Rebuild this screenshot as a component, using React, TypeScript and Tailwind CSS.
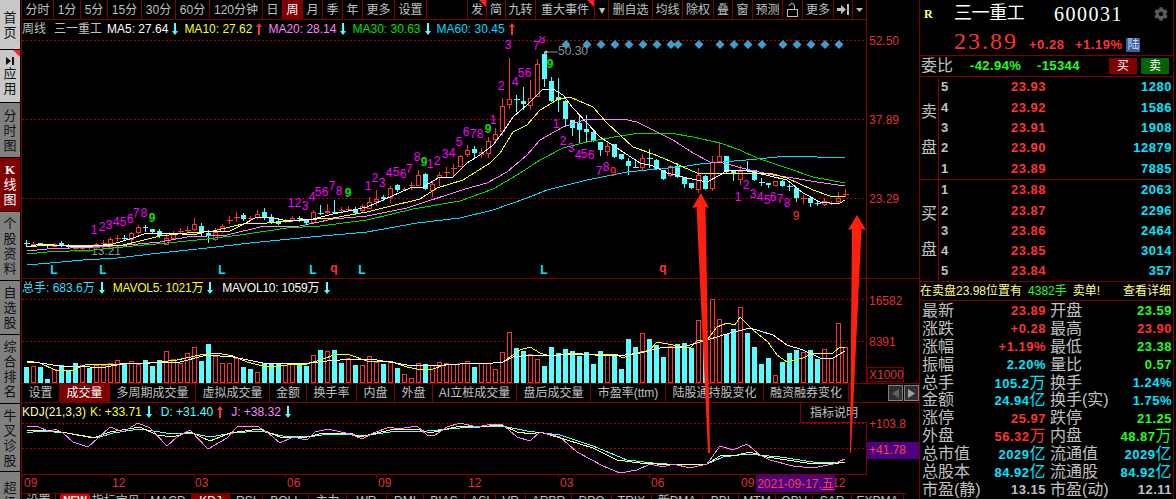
import { FaCog } from "react-icons/fa";

const RED = "#ff3232";
const CYAN = "#55ffff";

// [red?, bodyTop, bodyBottom, high, low] in page pixels, one per week, 7px apart
const candles: number[][] = [
  [0,243,243,240,247],[1,244,244,242,247],[0,243,246,243,246],[0,245,246,244,248],[1,244,246,243,247],[0,243,245,241,247],
  [0,246,246,244,249],[1,248,248,246,251],[1,247,248,246,250],[1,246,247,245,250],[1,244,247,243,250],[1,243,243,240,247],
  [1,239,243,237,247],[1,238,238,235,241],[0,238,238,235,241],[1,233,239,232,242],[1,227,232,225,234],[0,227,228,225,232],
  [0,229,232,229,233],[0,231,236,229,238],[1,238,244,234,245],[1,233,238,231,240],[1,231,231,228,234],[1,230,230,226,233],
  [1,224,229,218,231],[0,226,232,223,237],[0,233,236,230,243],[1,232,239,228,241],[1,226,231,224,233],[1,220,220,216,224],
  [1,217,217,212,222],[0,215,219,213,221],[1,218,218,216,221],[1,214,217,210,219],[0,212,218,208,220],[0,217,222,214,224],
  [0,221,224,220,225],[1,221,221,219,223],[1,218,220,216,222],[0,218,218,216,222],[0,220,223,219,224],[1,212,222,210,224],
  [0,213,213,205,215],[1,211,212,204,214],[0,212,212,200,214],[1,210,210,207,212],[1,209,209,206,212],[0,209,213,207,215],
  [1,206,210,204,212],[1,202,208,197,209],[1,199,201,190,206],[0,197,199,195,201],[1,188,197,186,203],[0,185,190,184,192],
  [1,189,189,187,191],[1,185,185,182,190],[1,175,185,170,186],[0,174,189,173,190],[1,184,190,182,197],[1,175,177,172,186],
  [1,172,172,167,177],[1,168,168,164,177],[1,156,166,155,167],[1,150,154,145,157],[0,149,153,146,158],[1,152,154,148,158],
  [1,141,153,137,158],[1,134,139,128,143],[1,106,131,98,136],[1,99,104,58,109],[0,99,99,95,112],[0,101,104,87,110],
  [1,98,105,80,110],[1,64,96,59,97],[0,54,79,52,87],[0,81,101,77,102],[0,97,100,78,112],[0,101,119,100,127],
  [0,120,128,120,136],[0,123,130,116,143],[0,129,132,115,143],[0,132,141,131,142],[0,142,150,142,156],[1,146,151,141,156],
  [0,144,157,144,158],[0,154,159,154,160],[0,161,166,158,175],[0,167,167,159,168],[1,158,167,154,171],[0,158,158,149,168],
  [0,160,169,159,170],[0,170,179,170,180],[1,166,175,165,177],[0,166,177,163,178],[0,177,184,177,188],[0,183,188,183,189],
  [1,175,189,168,193],[0,176,189,175,190],[1,162,188,156,191],[1,156,161,143,162],[0,156,172,156,173],[0,171,173,171,181],
  [1,171,179,165,185],[0,170,170,161,172],[0,170,180,170,181],[0,182,182,178,186],[0,183,185,183,188],[1,181,185,181,186],
  [0,181,186,180,187],[0,186,186,184,191],[0,188,198,187,202],[1,198,198,195,204],[0,198,203,197,207],[0,203,203,201,206],
  [1,201,204,198,206],[1,203,203,201,205],[1,198,201,192,203],[1,194,194,189,197],
];

// [red?, barTop], one per week
const volumes: number[][] = [
  [0,367],[1,366],[0,367],[0,379],[1,369],[0,365],[0,371],[0,363],[1,365],[0,368],[1,365],[1,365],[1,363],[1,360],[0,363],[1,361],
  [1,364],[0,360],[0,366],[0,360],[1,351],[1,359],[1,363],[1,353],[1,347],[0,361],[0,344],[1,356],[1,363],[1,363],[1,358],[0,367],
  [0,369],[1,372],[0,363],[0,363],[0,363],[1,365],[1,363],[0,365],[0,366],[1,355],[0,350],[1,351],[0,350],[0,363],[1,358],[0,365],
  [1,365],[1,356],[1,362],[0,364],[1,361],[0,368],[1,374],[1,378],[1,363],[0,364],[1,365],[1,362],[1,363],[1,364],[1,363],[1,361],
  [0,367],[1,363],[1,363],[1,369],[1,352],[1,332],[0,348],[0,351],[1,354],[1,359],[0,366],[0,347],[0,353],[0,349],[0,351],[0,356],
  [0,352],[0,364],[0,351],[1,354],[0,354],[0,369],[0,339],[0,347],[1,333],[0,339],[0,345],[0,357],[1,346],[0,344],[0,343],[0,348],
  [1,320],[0,345],[1,299],[1,319],[0,334],[0,329],[1,307],[0,333],[0,347],[0,364],[0,358],[1,375],[0,362],[0,353],[0,350],[1,352],
  [0,350],[0,359],[1,349],[1,358],[1,323],[1,347],
];

const ma5 = "27,247 40,244 67,246 93,246 113,244 133,238 147,233 170,233 193,235 208,231 230,231 240,226 257,217 270,217 287,221 313,219 333,214 353,210 367,207 383,200 410,188 423,187 440,177 453,177 467,163 480,155 493,145 503,132 513,117 527,105 537,95 543,89 553,89 563,95 573,108 587,123 600,137 620,150 640,163 653,166 667,173 687,178 707,182 720,175 727,170 740,170 753,172 770,176 787,180 803,193 820,202 830,203 840,203 845,200";
const ma10 = "27,247 47,245 93,245 123,245 140,241 160,236 187,233 213,231 247,223 267,223 317,219 333,218 367,212 387,207 420,199 437,188 463,180 490,163 500,153 513,132 527,125 540,110 557,100 570,97 593,107 607,123 620,135 633,147 653,154 670,161 683,167 697,173 733,174 753,173 773,174 787,178 813,190 830,196 845,197";
const ma20 = "27,251 47,249 93,247 127,245 160,242 187,237 227,235 260,227 300,226 333,219 367,216 407,208 465,189 487,183 507,172 527,155 540,140 563,127 587,119 623,119 637,122 657,132 673,140 693,153 710,162 723,163 750,170 773,175 793,178 817,182 845,186";
const ma30 = "27,254 47,252 93,250 133,246 167,243 207,239 240,235 287,228 320,226 367,220 413,209 460,201 493,189 517,175 540,160 563,148 587,142 620,136 640,133 670,133 693,137 720,143 740,150 757,158 787,168 813,177 845,183";
const ma60 = "27,265 50,263 83,260 117,258 160,253 207,248 250,243 300,238 367,232 417,223 460,218 493,210 527,198 547,190 587,180 627,172 657,169 680,167 700,164 723,162 757,159 787,156 817,157 845,158";

const volMa5 = "27,362 40,363 55,370 73,370 87,364 107,365 133,363 147,363 160,362 177,360 200,355 217,353 233,356 247,362 267,367 287,365 307,364 320,360 337,354 350,355 367,361 390,361 407,367 417,369 433,369 447,364 460,364 493,363 503,362 510,357 520,350 530,347 540,353 550,356 573,353 593,355 617,354 622,358 637,353 650,350 657,342 673,345 690,348 698,340 707,340 717,327 727,323 735,325 740,317 753,330 768,342 777,355 787,362 803,358 813,353 833,353 840,347 845,347";
const volMa10 = "27,361 40,363 60,366 80,366 100,368 123,364 150,363 180,362 207,355 233,357 263,363 300,364 327,361 353,359 377,360 407,365 433,366 460,364 493,363 503,362 513,357 530,355 547,356 573,354 617,356 640,353 660,348 683,347 707,340 730,333 750,328 773,335 787,345 803,350 820,358 833,358 845,351";

const kdjJ = "27,427 37,426 50,432 55,429 63,433 73,442 88,447 98,438 110,427 123,432 138,423 150,428 167,446 177,437 190,430 208,449 227,438 237,427 257,426 267,432 280,443 293,437 307,440 315,432 328,429 350,434 362,439 373,433 390,427 398,429 417,426 427,435 435,435 447,427 460,423 477,427 487,425 502,424 517,437 530,441 540,432 560,437 577,452 603,466 620,473 637,470 650,464 663,467 673,464 690,468 707,464 720,446 733,450 747,444 760,455 770,460 793,466 813,468 833,464 845,459";
const kdjK = "27,431 40,430 53,431 67,433 93,438 110,432 140,427 157,435 173,437 190,432 210,441 230,433 260,429 280,437 307,437 323,433 350,433 360,437 390,430 417,429 430,433 460,426 477,427 502,425 517,432 532,434 540,432 567,440 593,448 617,460 640,463 673,465 707,464 720,456 737,455 750,452 767,457 807,463 833,464 845,462";
const kdjD = "27,433 40,431 67,433 97,438 113,433 140,429 173,434 190,433 210,437 233,433 260,431 283,436 307,437 330,434 353,435 363,436 390,432 427,431 460,428 480,427 502,426 527,431 560,435 593,446 627,460 653,463 680,465 707,464 723,457 747,454 780,457 813,462 845,462";

// TD sequence digits: [x, centre y, digit, colour]
const M = "#ff00ff";
const G = "#00e000";
const seq: [number, number, string, string][] = [
  [94,230,"1",M],[102,227,"2",M],[109,225,"3",M],[116,222,"4",M],[123,222,"5",M],[130,219,"6",M],[136,213,"7",M],[144,213,"8",M],[152,218,"9",G],
  [291,203,"1",M],[298,203,"2",M],[305,206,"3",M],[312,197,"4",M],[318,192,"5",M],[325,192,"6",M],[332,186,"7",M],[339,191,"8",M],[348,193,"9",G],
  [368,186,"1",M],[375,178,"2",M],[382,183,"3",M],[389,173,"4",M],[396,172,"5",M],[403,174,"6",M],[409,169,"7",M],[417,157,"8",M],[424,162,"9",G],
  [430,164,"1",M],[437,161,"2",M],[445,154,"3",M],[452,153,"4",M],[459,142,"5",M],[466,132,"6",M],[473,134,"7",M],[480,134,"8",M],[488,129,"9",G],
  [493,120,"1",M],[501,86,"2",M],[515,82,"4",M],[521,73,"5",M],[528,73,"6",M],[508,45,"3",M],[536,46,"7",M],[542,39,"8",M],[550,64,"9",G],
  [556,124,"1",M],[563,141,"2",M],[571,148,"3",M],[578,155,"4",M],[584,154,"5",M],[591,155,"6",M],[599,171,"7",M],[606,167,"8",M],[613,172,"9",RED],
  [738,197,"1",M],[746,185,"2",M],[753,194,"3",M],[760,197,"4",M],[767,200,"5",M],[773,197,"6",M],[780,199,"7",M],[787,203,"8",M],[796,216,"9",RED],
];

const diamonds = [566,587,601,615,629,643,657,671,678,699,720,734,748,762,783,797,811,825,839];
const ticksL = [54,103,222,313,362,544];
const ticksQ = [334,663];
const timeLabels: [number, string][] = [[24,"09"],[112,"12"],[195,"03"],[287,"06"],[378,"09"],[468,"12"],[560,"03"],[651,"06"],[741,"09"],[832,"12"]];
const timeTicks = [22,110,194,285,376,467,558,649,740,831];

const railItems = [
  { text: "首页", h: "h-[49px]", tone: "light" },
  { text: "应用", h: "h-[52px]", tone: "app" },
  { text: "分时图", h: "h-[54px]", tone: "mid" },
  { text: "K线图", h: "h-[53px]", tone: "active" },
  { text: "个股资料", h: "h-[68px]", tone: "mid" },
  { text: "自选股", h: "h-[53px]", tone: "mid" },
  { text: "综合排名", h: "h-[68px]", tone: "mid" },
  { text: "牛叉诊股", h: "h-[67px]", tone: "mid" },
  { text: "超级盘口", h: "h-[27px] justify-start overflow-hidden pt-[8px]", tone: "mid" },
];

const periodTabs = [
  { t: "分时", w: "w-[32px]" }, { t: "1分", w: "w-[27px]" }, { t: "5分", w: "w-[27px]" }, { t: "15分", w: "w-[34px]" },
  { t: "30分", w: "w-[34px]" }, { t: "60分", w: "w-[34px]" }, { t: "120分钟", w: "w-[53px]" }, { t: "日", w: "w-[20px]" },
  { t: "周", w: "w-[20px]", active: true }, { t: "月", w: "w-[20px]" }, { t: "季", w: "w-[20px]" }, { t: "年", w: "w-[20px]" },
  { t: "更多", w: "w-[32px]" }, { t: "设置", w: "w-[32px]" },
];

const toolTabs = [
  { t: "发", w: "w-[19px]", corner: true }, { t: "简", w: "w-[19px]" }, { t: "九转", w: "w-[30px]" },
  { t: "重大事件", w: "w-[59px]", corner: true }, { t: "▾", w: "w-[14px]" }, { t: "删自选", w: "w-[44px]" },
  { t: "均线", w: "w-[30px]" }, { t: "除权", w: "w-[31px]" }, { t: "叠", w: "w-[19px]" }, { t: "窗", w: "w-[20px]" },
  { t: "预测", w: "w-[30px]" },
];

const volumeTabs = [
  { t: "设置", w: "w-[38px]" }, { t: "成交量", w: "w-[50px]", active: true }, { t: "多周期成交量", w: "w-[86px]" },
  { t: "虚拟成交量", w: "w-[74px]" }, { t: "金额", w: "w-[37px]" }, { t: "换手率", w: "w-[50px]" }, { t: "内盘", w: "w-[38px]" },
  { t: "外盘", w: "w-[38px]" }, { t: "AI立桩成交量", w: "w-[84px]" }, { t: "盘后成交量", w: "w-[74px]" },
  { t: "市盈率(ttm)", w: "w-[75px]" }, { t: "陆股通持股变化", w: "w-[98px]" }, { t: "融资融券变化", w: "w-[85px]" },
];

const indicatorTabs = [
  { t: "设置", w: "w-[34px]" }, { t: "指标宝贝", w: "w-[89px]", isNew: true }, { t: "MACD", w: "w-[47px]" }, { t: "KDJ", w: "w-[38px]", active: true },
  { t: "RSI", w: "w-[33px]" }, { t: "BOLL", w: "w-[46px]" }, { t: "主力", w: "w-[38px]" }, { t: "WR", w: "w-[40px]" },
  { t: "DMI", w: "w-[37px]" }, { t: "BIAS", w: "w-[41px]" }, { t: "ASI", w: "w-[31px]" }, { t: "VR", w: "w-[30px]" },
  { t: "ARBR", w: "w-[46px]" }, { t: "DPO", w: "w-[40px]" }, { t: "TRIX", w: "w-[40px]" }, { t: "新DMA", w: "w-[51px]" },
  { t: "BBI", w: "w-[36px]" }, { t: "MTM", w: "w-[37px]" }, { t: "OBV", w: "w-[37px]" }, { t: "SAR", w: "w-[39px]" }, { t: "EXPMA", w: "w-[52px]" },
];

const sellRows = [["5","23.93","1280"],["4","23.92","1586"],["3","23.91","1908"],["2","23.90","12879"],["1","23.89","7885"]];
const buyRows = [["1","23.88","2063"],["2","23.87","2296"],["3","23.86","2464"],["4","23.85","3014"],["5","23.84","357"]];

const R = "text-[#ff3232]";
const Gn = "text-[#22ff22]";
const C = "text-[#00e5ff]";
const W = "text-[#c0c0c0]";
const stats: [string, string, string, string, string, string][] = [
  ["最新","23.89",R,"开盘","23.59",Gn],
  ["涨跌","+0.28",R,"最高","23.90",R],
  ["涨幅","+1.19%",R,"最低","23.38",Gn],
  ["振幅","2.20%",C,"量比","0.57",Gn],
  ["总手","105.2万",C,"换手","1.24%",C],
  ["金额","24.94亿",C,"换手(实)","1.75%",C],
  ["涨停","25.97",R,"跌停","21.25",Gn],
  ["外盘","56.32万",R,"内盘","48.87万",Gn],
  ["总市值","2029亿",C,"流通值","2029亿",C],
  ["总股本","84.92亿",C,"流通股","84.92亿",C],
  ["市盈(静)","13.15",W,"市盈(动)","12.11",W],
];

function Dir({ up }: { up?: boolean }) {
  return (
    <svg width="6" height="12" viewBox="0 0 6 12" className="shrink-0">
      {up ? (
        <path d="M3 0 L6 4 L4 4 L4 12 L2 12 L2 4 L0 4 Z" fill={RED} />
      ) : (
        <path d="M3 12 L6 8 L4 8 L4 0 L2 0 L2 8 L0 8 Z" fill={CYAN} />
      )}
    </svg>
  );
}

function Corner() {
  return <span className="absolute right-0 top-0 h-0 w-0 border-l-[7px] border-t-[7px] border-l-transparent border-t-[#ff2020]" />;
}

function Rail() {
  return (
    <nav className="flex h-[499px] w-[21px] shrink-0 flex-col gap-[1px] overflow-hidden pr-[1px]">
      {railItems.map((item) => {
        const bg =
          item.tone === "active"
            ? "bg-[#800000] text-white"
            : item.tone === "mid"
              ? "bg-[#808080] text-[#111]"
              : "bg-[#c8c8c8] text-[#111]";
        return (
          <div key={item.text} className={`relative flex w-[20px] shrink-0 flex-col items-center justify-center text-[13px] leading-[15px] ${item.h} ${bg}`}>
            {item.tone === "app" && (
              <>
                <Corner />
                <svg width="8" height="8" viewBox="0 0 8 8" className="mb-[1px]">
                  <path d="M0 0 L5 4 L0 8 Z M6 0 H8 V8 H6 Z" fill="#111" />
                </svg>
              </>
            )}
            {item.text.split("").map((c, i) => (
              <span key={i} className={c === "K" ? "font-['Liberation_Serif'] font-bold" : ""}>{c}</span>
            ))}
          </div>
        );
      })}
    </nav>
  );
}

function TabCell({ t, w, active, corner }: { t: string; w: string; active?: boolean; corner?: boolean }) {
  return (
    <div className={`relative flex h-full shrink-0 items-center justify-center border-r border-[#800000] ${w} ${active ? "bg-[#800000] text-white" : ""}`}>
      {corner && <Corner />}
      {t}
    </div>
  );
}

function Toolbar() {
  return (
    <div className="flex h-[20px] w-[845px] justify-between border-b border-r border-[#800000] text-[12px] leading-none">
      <div className="flex">
        {periodTabs.map((p) => (
          <TabCell key={p.t} {...p} />
        ))}
      </div>
      <div className="flex border-l border-[#800000]">
        {toolTabs.map((p) => (
          <TabCell key={p.t} {...p} />
        ))}
        <div className="flex h-full w-[20px] items-center justify-center border-r border-[#800000]">
          <svg width="11" height="14" viewBox="0 0 11 14" fill="none" stroke="#c0c0c0">
            <path d="M7.5 6 V3 a2.5 2.5 0 0 0 -5 0" />
            <rect x="0.5" y="6.5" width="10" height="7" />
          </svg>
        </div>
        <TabCell t="更多" w="w-[31px]" />
        <div className="flex h-full w-[19px] items-center justify-center border-r border-[#800000]">
          <svg width="12" height="11" viewBox="0 0 12 11">
            <path d="M0 4 H4 V1 L9 5.5 L4 10 V7 H0 Z M10 0 H12 V11 H10 Z" fill="#c0c0c0" />
          </svg>
        </div>
        <div className="flex h-full w-[13px] items-center justify-center">
          <svg width="7" height="4" viewBox="0 0 7 4"><path d="M0 0 H7 L3.5 4 Z" fill="#c0c0c0" /></svg>
        </div>
      </div>
    </div>
  );
}

function Candles() {
  return (
    <g shapeRendering="crispEdges">
      {candles.map(([red, top, bot, hi, lo], i) => {
        const x = 26.5 + 7 * i;
        const color = red ? RED : CYAN;
        return (
          <g key={i}>
            <line x1={x} x2={x} y1={hi} y2={top} stroke={color} />
            <line x1={x} x2={x} y1={bot} y2={lo} stroke={color} />
            {top === bot ? (
              <line x1={x - 3} x2={x + 3} y1={top + 0.5} y2={top + 0.5} stroke={color} />
            ) : red ? (
              <rect x={x - 2} y={top + 0.5} width={4} height={bot - top} fill="#000" stroke={color} />
            ) : (
              <rect x={x - 2.5} y={top} width={5} height={bot - top} fill={color} />
            )}
          </g>
        );
      })}
    </g>
  );
}

function Dotted({ y }: { y: number }) {
  return <line x1={22} x2={866} y1={y + 0.5} y2={y + 0.5} stroke="#b00000" strokeDasharray="1.5 2.5" shapeRendering="crispEdges" />;
}

function AxisLine({ from, to }: { from: number; to: number }) {
  return <line x1={866.5} x2={866.5} y1={from} y2={to} stroke="#800000" shapeRendering="crispEdges" />;
}

function AxisText({ y, children }: { y: number; children: string }) {
  return <text x={869} y={y + 5} fontSize={12} fill="#e03030">{children}</text>;
}

function Line({ points, color }: { points: string; color: string }) {
  return <polyline points={points} fill="none" stroke={color} strokeWidth={1} shapeRendering="crispEdges" />;
}

function PricePane() {
  return (
    <div className="border-b border-[#800000]">
      <div className="flex h-[16px] w-[845px] items-center border-r border-[#800000] pt-[2px] text-[12px]">
        <span className="w-[32px]">周线</span>
        <span className="w-[53px]">三一重工</span>
        <span className="text-white">MA5: 27.64</span>
        <span className="ml-[4px]"><Dir /></span>
        <span className="ml-[6px] text-[#ffff00]">MA10: 27.62</span>
        <span className="ml-[4px]"><Dir up /></span>
        <span className="ml-[6px] text-[#ff80ff]">MA20: 28.14</span>
        <span className="ml-[4px]"><Dir /></span>
        <span className="ml-[6px] text-[#00e000]">MA30: 30.63</span>
        <span className="ml-[4px]"><Dir /></span>
        <span className="ml-[6px] text-[#00d8ff]">MA60: 30.45</span>
        <span className="ml-[4px]"><Dir up /></span>
      </div>
      <svg width="897" height="242" viewBox="22 36 897 242" className="block font-['Liberation_Sans']">
        <AxisLine from={36} to={278} />
        <Dotted y={40} />
        <Dotted y={119} />
        <Dotted y={198} />
        <AxisText y={40}>52.50</AxisText>
        <AxisText y={119}>37.89</AxisText>
        <AxisText y={198}>23.29</AxisText>
        {diamonds.map((x) => (
          <path key={x} d={`M${x} 40 L${x + 4.5} 44.5 L${x} 49 L${x - 4.5} 44.5 Z`} fill="#3a9fd0" />
        ))}
        <Candles />
        <Line points={ma60} color="#00d8ff" />
        <Line points={ma30} color="#00e000" />
        <Line points={ma20} color="#ff80ff" />
        <Line points={ma10} color="#ffff00" />
        <Line points={ma5} color="#ffffff" />
        <path d="M546 52 H558" stroke="#909090" fill="none" />
        <circle cx={546} cy={52} r={1.5} fill="#c0c0c0" />
        <text x={558} y={55} fontSize={12} fill="#909090">50.30</text>
        <path d="M75 251 H90" stroke="#00c000" fill="none" />
        <text x={91} y={255} fontSize={12} fill="#909090">13.21</text>
        {seq.map(([x, y, d, c], i) => (
          <text key={i} x={x} y={y + 4} fontSize={12} textAnchor="middle" fill={c} fontWeight={c === G ? 700 : 400}>{d}</text>
        ))}
        {ticksL.map((x) => (
          <text key={x} x={x} y={274} fontSize={12} textAnchor="middle" fill="#00e5ff" fontWeight={700}>L</text>
        ))}
        {ticksQ.map((x) => (
          <text key={x} x={x} y={272} fontSize={12} textAnchor="middle" fill={RED} fontWeight={700}>q</text>
        ))}
      </svg>
    </div>
  );
}

function VolumePane() {
  return (
    <div>
      <div className="flex h-[18px] w-[845px] items-center border-r border-[#800000] text-[12px]">
        <span className="text-[#40d8ff]">总手: 683.6万</span>
        <span className="ml-[4px]"><Dir /></span>
        <span className="ml-[8px] tracking-[-0.2px] text-[#ffff00]">MAVOL5: 1021万</span>
        <span className="ml-[4px]"><Dir /></span>
        <span className="ml-[9px] tracking-[-0.2px] text-white">MAVOL10: 1059万</span>
        <span className="ml-[5px]"><Dir /></span>
      </div>
      <svg width="897" height="86" viewBox="22 297 897 86" className="block overflow-visible font-['Liberation_Sans']">
        <AxisLine from={297} to={383} />
        <Dotted y={299} />
        <Dotted y={341} />
        <g shapeRendering="crispEdges">
          {volumes.map(([red, top], i) => {
            const x = 26.5 + 7 * i;
            return red ? (
              <rect key={i} x={x - 2} y={top + 0.5} width={4} height={382 - top} fill="#000" stroke={RED} />
            ) : (
              <rect key={i} x={x - 2.5} y={top} width={5} height={383 - top} fill={CYAN} />
            );
          })}
        </g>
        <Line points={volMa5} color="#ffff00" />
        <Line points={volMa10} color="#ffffff" />
        <AxisText y={300}>16582</AxisText>
        <AxisText y={341}>8391</AxisText>
        <rect x={867.5} y={367.5} width={36} height={14} fill="#000" stroke="#800000" shapeRendering="crispEdges" />
        <text x={869} y={379} fontSize={12} fill="#e03030">X1000</text>
      </svg>
    </div>
  );
}

function ScrollButton({ flip }: { flip?: boolean }) {
  return (
    <div className="flex h-[16px] w-[15px] items-center justify-center border border-[#808080] bg-[#303030]">
      <svg width="7" height="9" viewBox="0 0 7 9" className={flip ? "rotate-180" : ""}>
        <path d="M7 0 V9 L0 4.5 Z" fill={flip ? "#a0a0a0" : "#606060"} />
      </svg>
    </div>
  );
}

function VolumeTabs() {
  return (
    <div className="flex h-[20px] w-[897px] items-stretch justify-between border-y border-[#800000] text-[12px] leading-none">
      <div className="flex">
        {volumeTabs.map((p) => (
          <TabCell key={p.t} {...p} />
        ))}
      </div>
      <div className="flex items-center gap-[1px]">
        <ScrollButton />
        <ScrollButton flip />
      </div>
    </div>
  );
}

function KdjPane() {
  return (
    <div className="relative">
      <div className="flex h-[17px] w-[845px] items-center border-r border-[#800000] text-[12px]">
        <span className="text-[#ffffa0]">KDJ(21,3,3)</span>
        <span className="ml-[4px] text-[#ffff00]">K: +33.71</span>
        <span className="ml-[4px]"><Dir /></span>
        <span className="ml-[9px] text-[#55ffff]">D: +31.40</span>
        <span className="ml-[4px]"><Dir up /></span>
        <span className="ml-[8px] text-[#ff80ff]">J: +38.32</span>
        <span className="ml-[4px]"><Dir /></span>
      </div>
      <svg width="897" height="55" viewBox="22 420 897 55" className="block overflow-visible font-['Liberation_Sans']">
        <AxisLine from={420} to={475} />
        <Dotted y={423} />
        <Dotted y={448} />
        <line x1={22} x2={867} y1={474.5} y2={474.5} stroke="#800000" shapeRendering="crispEdges" />
        <Line points={kdjD} color={CYAN} />
        <Line points={kdjK} color="#ffff80" />
        <Line points={kdjJ} color="#ff80ff" />
        <AxisText y={423}>+103.8</AxisText>
        <rect x={867} y={442} width={52} height={17} fill="#4b0082" />
        <text x={869} y={454} fontSize={12} fill="#ff4040">+41.78</text>
      </svg>
      <div className="absolute left-[778px] top-0 flex h-[20px] w-[67px] items-center justify-center border-b border-l border-[#800000] bg-black text-[12px]">
        指标说明
      </div>
    </div>
  );
}

function TimeRow() {
  return (
    <div className="relative h-[18px]">
      <svg width="897" height="18" viewBox="22 475 897 18" className="block font-['Liberation_Sans']">
        {timeTicks.map((x) => (
          <line key={x} x1={x + 0.5} x2={x + 0.5} y1={475} y2={478} stroke="#800000" shapeRendering="crispEdges" />
        ))}
        {timeLabels.map(([x, t]) => (
          <text key={x} x={x} y={487} fontSize={12} fill="#e03030">{t}</text>
        ))}
      </svg>
      <div className="absolute left-[734px] top-0 flex h-[17px] w-[79px] items-center justify-center bg-[#4b0082] text-[12px] text-[#ff4040]">
        2021-09-17,<span className="underline">五</span>
      </div>
    </div>
  );
}

function IndicatorTabs() {
  return (
    <div className="flex h-[6px] w-[884px] overflow-hidden border-t border-[#800000] text-[12px] leading-[14px]">
      {indicatorTabs.map((p) => (
        <div key={p.t} className={`flex h-[16px] shrink-0 justify-center gap-[2px] border-r border-[#800000] ${p.w} ${p.active ? "bg-[#800000] text-white" : ""}`}>
          {p.isNew && <span className="h-[12px] rounded-[2px] bg-[#e00000] px-[3px] text-[10px] font-bold text-white">NEW</span>}
          {p.t}
        </div>
      ))}
    </div>
  );
}

function RedArrows() {
  return (
    <svg width="897" height="499" viewBox="22 0 897 499" className="pointer-events-none absolute left-0 top-0">
      <path d="M701 193 L709 208 L705.5 207 L710 453 L708 453 L696.5 207 L692 208 Z" fill="#ff2010" />
      <path d="M857 215 L866 230 L861.5 229 L851 453 L850 453 L852 229 L848 230 Z" fill="#ff2010" />
    </svg>
  );
}

function OrderBook({ label, rows, className }: { label: string; rows: string[][]; className: string }) {
  return (
    <div className={`flex border-b border-[#800000] ${className}`}>
      <div className="flex w-[19px] flex-col items-center justify-center gap-[20px] border-r border-[#800000] pt-[3px] text-[16px] leading-[16px]">
        <span>{label}</span>
        <span>盘</span>
      </div>
      <div className="flex flex-1 flex-col">
        {rows.map(([n, price, vol]) => (
          <div key={n} className="flex h-[20.3px] items-center pl-[2px] pr-[1px] text-[13px] font-bold tracking-[0.5px]">
            <span className="w-[70px]">{n}</span>
            <span className="text-[#ff3232]">{price}</span>
            <span className="ml-auto text-[#00e5ff]">{vol}</span>
          </div>
        ))}
      </div>
    </div>
  );
}

function StatValue({ value, color }: { value: string; color: string }) {
  const unit = /[万亿]$/.test(value) ? value.slice(-1) : "";
  const num = unit ? value.slice(0, -1) : value;
  return (
    <span className={`font-bold tracking-[0.5px] text-[13px] ${color}`}>
      {num}
      {unit && <span className="text-[16px] font-normal">{unit}</span>}
    </span>
  );
}

function Quote() {
  return (
    <aside className="h-[499px] w-[255px] shrink-0 border-l border-r border-[#800000]">
      <div className="relative h-[56px] border-b border-[#800000]">
        <div className="flex h-[27px] items-center">
          <span className="w-[34px] pl-[4px] font-['Liberation_Serif'] text-[12px] font-bold text-[#ffff80]">R</span>
          <span className="w-[100px] text-[18px] tracking-[-0.4px] text-white">三一重工</span>
          <span className="font-['Liberation_Serif'] text-[20px] tracking-[1.5px] text-white">600031</span>
          <FaCog className="ml-auto mr-[5px] text-[14px] text-[#5a5a5a]" />
        </div>
        <div className="flex h-[27px] items-center pl-[34px] font-bold">
          <span className="w-[75px] font-['Liberation_Serif'] text-[24px] font-normal leading-none tracking-[2px] text-[#ff3232]">23.89</span>
          <span className="mt-[9px] w-[46px] text-[13px] tracking-[0.5px] text-[#ff3232]">+0.28</span>
          <span className="mt-[9px] text-[13px] tracking-[0.5px] text-[#ff3232]">+1.19%</span>
          <span className="ml-[4px] mt-[9px] flex h-[14px] w-[14px] items-center justify-center bg-[#3a5fa5] text-[12px] font-normal text-[#d0d8f0]">陆</span>
        </div>
      </div>
      <div className="flex h-[21px] items-center border-b border-[#800000] pl-[1px]">
        <span className="w-[49px] text-[16px]">委比</span>
        <span className="w-[67px] text-[13px] font-bold tracking-[0.4px] text-[#22ff22]">-42.94%</span>
        <span className="text-[13px] font-bold tracking-[0.4px] text-[#22ff22]">-15344</span>
        <span className="ml-auto flex h-[16px] w-[28px] items-center justify-center bg-[#800000] text-[12px] text-white">买</span>
        <span className="ml-[4px] mr-[4px] flex h-[16px] w-[28px] items-center justify-center bg-[#006400] text-[12px] text-white">卖</span>
      </div>
      <OrderBook label="卖" rows={sellRows} className="h-[103px]" />
      <OrderBook label="买" rows={buyRows} className="h-[102px]" />
      <div className="flex h-[19px] items-center border-b border-[#800000] text-[12px] text-[#ffff80]">
        <span>在卖盘23.98位置有</span>
        <span className="ml-[6px] text-[#22ff22]">4382手</span>
        <span className="ml-[6px]">卖单!</span>
        <span className="ml-auto mr-[2px]">查看详细</span>
      </div>
      <div className="pl-[2px] pt-[1px]">
        {stats.map(([a, av, ac, b, bv, bc]) => (
          <div key={a} className="flex h-[17.9px] items-center text-[16px] leading-none">
            <div className="flex w-[124px] items-center justify-between">
              <span>{a}</span>
              <StatValue value={av} color={ac} />
            </div>
            <div className="ml-[4px] flex w-[122px] items-center justify-between">
              <span>{b}</span>
              <StatValue value={bv} color={bc} />
            </div>
          </div>
        ))}
      </div>
    </aside>
  );
}

export default function App() {
  return (
    <div className="flex h-[499px] w-[1176px] overflow-hidden bg-black font-['Liberation_Sans','Noto_Sans_CJK_SC',sans-serif] text-[12px] text-[#c0c0c0]">
      <Rail />
      <main className="relative h-[499px] w-[898px] shrink-0 border-l border-[#800000]">
        <Toolbar />
        <PricePane />
        <VolumePane />
        <VolumeTabs />
        <KdjPane />
        <TimeRow />
        <IndicatorTabs />
        <RedArrows />
      </main>
      <Quote />
    </div>
  );
}
